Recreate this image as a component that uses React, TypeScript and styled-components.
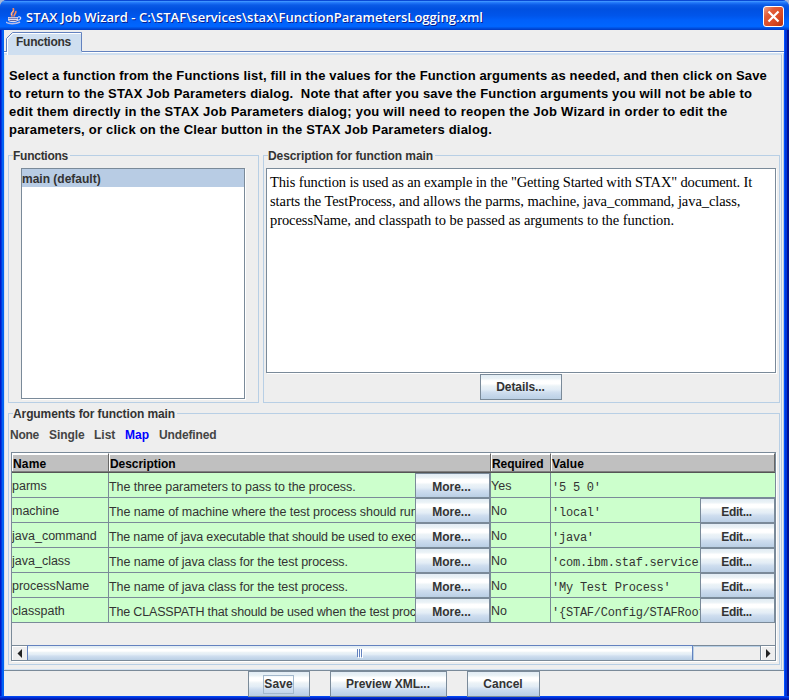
import React from "react";
import styled, { createGlobalStyle, css } from "styled-components";

const STEEL = "#7a8a99";
const PALE = "#b8cfe5";

const metal = css`
  background: linear-gradient(
    #e2ecf4 0,
    #eaf2f6 14%,
    #ffffff 24%,
    #ffffff 36%,
    #ecf3f7 46%,
    #e3edf6 60%,
    #cfdeef 72%,
    #c4d6ea 86%,
    #bacfe4 100%
  );
`;

const GlobalStyle = createGlobalStyle`
  * { box-sizing: border-box; }
  body { margin: 0; background: #a6b8d8; }
`;

const Window = styled.div`
  width: 789px;
  height: 700px;
  display: flex;
  flex-direction: column;
  overflow: hidden;
  border-radius: 7px 7px 0 0;
  background: #0046e8;
  font: bold 12px/14px "Liberation Sans", Arial, sans-serif;
  color: #333;
`;

const Text = styled.span<{ $ls?: number }>`
  display: block;
  white-space: pre;
  letter-spacing: ${(p) => p.$ls ?? 0}px;
`;

const TitleBar = styled.header`
  height: 30px;
  flex: none;
  display: flex;
  align-items: center;
  padding: 3px 5px 0 6px;
  color: #fff;
  font: 600 13px/18px "Open Sans", sans-serif;
  text-shadow: 1px 1px 0 #0a1f8f;
  background: linear-gradient(
    #0a48d4 0,
    #0a48d4 3%,
    #3c93ff 5%,
    #2176f8 9%,
    #0a5ae6 17%,
    #0050e0 30%,
    #0055ea 52%,
    #0060fa 68%,
    #0066ff 88%,
    #0050e0 94%,
    #0038c0 100%
  );
`;

const TitleText = styled(Text)`
  flex: 1;
  margin: 1px 0 0 4px;
`;

const Close = styled.button`
  width: 21px;
  height: 21px;
  padding: 0;
  display: grid;
  place-items: center;
  border: 1px solid #fff;
  border-radius: 3px;
  background: linear-gradient(135deg, #f0a088 0, #e25c38 30%, #da4a24 65%, #b83210 100%);
`;

const Body = styled.main`
  flex: 1;
  min-height: 0;
  display: flex;
  border: solid transparent;
  border-width: 0 5px 4px 4px;
  background:
    linear-gradient(#0050ff, #0030d8 40%, #00129a) bottom / 100% 4px no-repeat border-box,
    linear-gradient(90deg, #0019c8 0, #0019c8 1px, #0038e0 1px, #0038e0 2px, #0062f4 2px, #0062f4 4px) left / 4px 100% no-repeat border-box,
    linear-gradient(90deg, #0050ff 0, #0050ff 1px, #0035d8 1px, #0035d8 3px, #001090 3px) right / 5px 100% no-repeat border-box;
`;

const Client = styled.div`
  flex: 1;
  min-width: 0;
  display: flex;
  flex-direction: column;
  background: #eee;
`;

const TabStrip = styled.div`
  height: 22px;
  flex: none;
  display: flex;
  padding: 2px 0 0 2px;
  border-bottom: 1px solid #6382bf;
`;

const Tab = styled.div`
  position: relative;
  width: 77px;
  height: 23px;
`;

const TabLabel = styled(Text)`
  position: absolute;
  left: 10px;
  top: 3px;
`;

const Panel = styled.section`
  height: 618px;
  flex: none;
  display: flex;
  flex-direction: column;
  border: solid #cfdff0;
  border-width: 2px 3px 2px 1px;
  border-right: 3px double #b4c8de;
  margin-top: 1px;
  padding: 11px 2px 0 3px;
  box-shadow: 0 -1px #fff;
`;

const Intro = styled.div`
  height: 83px;
  padding: 1px 0 0 1px;
  font-size: 13px;
  line-height: 18px;
  color: #000;
`;

const Group = styled.fieldset<{ $w: number; $h: number }>`
  width: ${(p) => p.$w}px;
  height: ${(p) => p.$h}px;
  margin: 0;
  padding: 0;
  min-width: 0;
  border: 1px solid ${PALE};
  flex: none;
`;

const Legend = styled.legend`
  height: 13px;
  margin-left: 4px;
  padding: 0 2px 0 0;
`;

const Row = styled.div<{ $gap?: number }>`
  display: flex;
  gap: ${(p) => p.$gap ?? 0}px;
`;

const List = styled.div`
  width: 224px;
  height: 231px;
  margin: 6px 0 0 12px;
  border: 1px solid ${STEEL};
  background: #fff;
  box-shadow: 1px 1px #fff;
`;

const Selected = styled.div`
  height: 18px;
  padding: 3px 0 0;
  background: #b8cce4;
`;

const Prose = styled.div`
  width: 510px;
  height: 205px;
  margin: 6px 0 0 2px;
  padding: 4px 0 0 3px;
  border: 1px solid ${STEEL};
  background: #fff;
  color: #000;
  box-shadow: 1px 1px #fff;
  font: 14.5px/19px "Liberation Serif", "Times New Roman", serif;
`;

const Button = styled.button<{ $w: number; $h: number }>`
  width: ${(p) => p.$w}px;
  height: ${(p) => p.$h}px;
  flex: none;
  display: flex;
  align-items: center;
  justify-content: center;
  padding: 0 1px 0 0;
  border: 1px solid ${STEEL};
  font: inherit;
  color: #333;
  ${metal}
`;

const DetailsRow = styled.div`
  padding: 1px 0 0 216px;
`;

const ArgsGroup = styled(Group)`
  margin-top: 4px;
`;

const Kinds = styled.div`
  display: flex;
  height: 32px;
  padding: 8px 0 0 1px;
  color: #444;
`;

const Kind = styled(Text)<{ $w: number; $on?: boolean }>`
  width: ${(p) => p.$w}px;
  color: ${(p) => (p.$on ? "#0000ff" : "inherit")};
`;

const TablePane = styled.div`
  width: 765px;
  height: 209px;
  margin-left: 2px;
  display: flex;
  flex-direction: column;
  border: 1px solid ${STEEL};
  box-shadow: 1px 1px #fff;
`;

const columns = css`
  display: grid;
  grid-template-columns: 97px 382px 60px 224px;
`;

const HeadRow = styled.div`
  ${columns}
  height: 20px;
  flex: none;
  color: #000;
  background: #c0c0c0;
  border-bottom: 1px solid #555;
`;

const Head = styled.div`
  padding: 3px 0 0 1px;
  border: solid;
  border-width: 1px 1px 1px 0;
  border-color: #fff #666 #808080 #fff;
  box-shadow: inset 1px 1px #fff;
`;

const DataRow = styled.div`
  ${columns}
  height: 25px;
  flex: none;
  background: #ccffcc;
`;

const Cell = styled.div`
  min-width: 0;
  display: flex;
  overflow: hidden;
  border: solid ${STEEL};
  border-width: 0 1px 1px 0;
  font-weight: normal;
  font-size: 12.5px;
  &:last-child { border-right: 0; }
`;

const Clip = styled.div<{ $top: number; $left?: number; $mono?: boolean }>`
  flex: 1;
  min-width: 0;
  overflow: hidden;
  padding: ${(p) => p.$top}px 0 0 ${(p) => p.$left ?? 0}px;
  ${(p) => p.$mono && css`font: 12px/14px "Liberation Mono", "Courier New", monospace;`}
`;

const CellButton = styled(Button)`
  font-weight: bold;
  font-size: 12px;
  border-bottom: 0;
  padding: 2px 2px 0 0;
`;

const Blank = styled.div`
  flex: 1;
`;

const ScrollBar = styled.div`
  height: 15px;
  flex: none;
  display: flex;
  border-top: 1px solid ${STEEL};
`;

const Arrow = styled.div<{ $side: "left" | "right" }>`
  width: 15px;
  display: grid;
  place-items: center;
  box-shadow: inset 1px 1px #fff;
  ${(p) => p.$side === "right" && css`border-left: 1px solid ${STEEL};`}
`;

const Thumb = styled.div`
  width: 666px;
  display: grid;
  place-items: center;
  margin-top: -1px;
  border: 1px solid #6382bf;
  border-bottom: 0;
  ${metal}
`;

const Track = styled.div`
  flex: 1;
  box-shadow: inset 1px 1px ${PALE};
`;

const Footer = styled.footer`
  flex: 1;
  display: flex;
  gap: 20px;
  padding-left: 244px;
  border-top: 1px solid ${STEEL};
  margin-top: -1px;
`;

const FocusRing = styled.span`
  padding: 1px 0 2px;
  border: 1px solid #a3b8cc;
`;

const INTRO: [string, number][] = [
  ["Select a function from the Functions list, fill in the values for the Function arguments as needed, and then click on Save", 0.15],
  ["to return to the STAX Job Parameters dialog.  Note that after you save the Function arguments you will not be able to", 0.179],
  ["edit them directly in the STAX Job Parameters dialog; you will need to reopen the Job Wizard in order to edit the", 0.231],
  ["parameters, or click on the Clear button in the STAX Job Parameters dialog.", 0.202],
];

const PROSE: [string, number][] = [
  ['This function is used as an example in the "Getting Started with STAX" document. It', -0.137],
  ["starts the TestProcess, and allows the parms, machine, java_command, java_class,", -0.075],
  ["processName, and classpath to be passed as arguments to the function.", -0.07],
];

interface Arg {
  name: string;
  desc: string;
  required: string;
  value: string;
  edit?: boolean;
  tight?: number;
}

const ARGS: Arg[] = [
  { name: "parms", desc: "The three parameters to pass to the process.", required: "Yes", value: "'5 5 0'" },
  { name: "machine", desc: "The name of machine where the test process should run", required: "No", value: "'local'", edit: true },
  { name: "java_command", desc: "The name of java executable that should be used to exec", required: "No", value: "'java'", edit: true, tight: -0.16 },
  { name: "java_class", desc: "The name of java class for the test process.", required: "No", value: "'com.ibm.staf.service", edit: true },
  { name: "processName", desc: "The name of java class for the test process.", required: "No", value: "'My Test Process'", edit: true },
  { name: "classpath", desc: "The CLASSPATH that should be used when the test proc", required: "No", value: "'{STAF/Config/STAFRoot", edit: true, tight: -0.17 },
];

const JavaCup = () => (
  <svg width="16" height="17" viewBox="0 0 16 17" fill="none">
    <path d="M6.500 8.500C3 5.500 9.500 4 7 0M8.500 8.500C7 6.500 11 5.500 9.500 3" stroke="#f58a5c" strokeWidth="1.700" />
    <path d="M5.500 7C4.500 5 6.500 4 7.500 2.500" stroke="#ffd0b4" strokeWidth=".9" />
    <path d="M2 9h10v2.500c0 2-2 2.700-5 2.700s-5-.7-5-2.700z" fill="#dcdcf2" />
    <path d="M2.500 10.300h9M3.500 12.500h7" stroke="#50589c" strokeWidth=".9" />
    <path d="M12 9c3.500-1 4 2.500-.8 3.500" stroke="#dcdcf2" strokeWidth="1.200" />
    <path d="M0 14c2 2.300 10 2.300 14 0" stroke="#bcbce4" strokeWidth="1.500" />
  </svg>
);

const TabShape = () => (
  <svg width="77" height="23" viewBox="0 0 77 23">
    <path d="M1 23V7.500L7.500 1H76v22z" fill="#cfdff0" />
    <path d="M.5 20V6.500L6.500.5H75.500V19.500" fill="none" stroke="#6382bf" />
    <path d="M1.500 23V7L7 1.500H75" fill="none" stroke="#fff" />
  </svg>
);

export default function App() {
  return (
    <>
      <GlobalStyle />
      <Window>
        <TitleBar>
          <JavaCup />
          <TitleText $ls={0.044}>{"STAX Job Wizard - C:\\STAF\\services\\stax\\FunctionParametersLogging.xml"}</TitleText>
          <Close aria-label="Close">
            <svg width="13" height="13" viewBox="0 0 13 13">
              <path d="M1.500 1.500l10 10M11.500 1.500l-10 10" stroke="#fff" strokeWidth="2.200" />
            </svg>
          </Close>
        </TitleBar>
        <Body>
          <Client>
            <TabStrip>
              <Tab>
                <TabShape />
                <TabLabel $ls={-0.259}>Functions</TabLabel>
              </Tab>
            </TabStrip>
            <Panel>
              <Intro>
                {INTRO.map(([line, ls]) => (
                  <Text key={line} $ls={ls}>{line}</Text>
                ))}
              </Intro>
              <Row $gap={4}>
                <Group $w={251} $h={254}>
                  <Legend><Text $ls={-0.259}>Functions</Text></Legend>
                  <List>
                    <Selected><Text>main (default)</Text></Selected>
                  </List>
                </Group>
                <Group $w={517} $h={254}>
                  <Legend><Text $ls={-0.081}>Description for function main</Text></Legend>
                  <Prose>
                    {PROSE.map(([line, ls]) => (
                      <Text key={line} $ls={ls}>{line}</Text>
                    ))}
                  </Prose>
                  <DetailsRow>
                    <Button $w={82} $h={26}><Text $ls={-0.086}>Details...</Text></Button>
                  </DetailsRow>
                </Group>
              </Row>
              <ArgsGroup $w={772} $h={258}>
                <Legend><Text $ls={-0.099}>Arguments for function main</Text></Legend>
                <Kinds>
                  <Kind $w={39} $ls={-0.25}>None</Kind>
                  <Kind $w={45} $ls={-0.086}>Single</Kind>
                  <Kind $w={31}>List</Kind>
                  <Kind $w={34} $on>Map</Kind>
                  <Kind $w={70} $ls={-0.13}>Undefined</Kind>
                </Kinds>
                <TablePane>
                  <HeadRow>
                    <Head><Text $ls={0.2}>Name</Text></Head>
                    <Head><Text $ls={-0.047}>Description</Text></Head>
                    <Head><Text $ls={-0.064}>Required</Text></Head>
                    <Head><Text $ls={0.128}>Value</Text></Head>
                  </HeadRow>
                  {ARGS.map((arg) => (
                    <DataRow key={arg.name}>
                      <Cell>
                        <Clip $top={6}><Text>{arg.name}</Text></Clip>
                      </Cell>
                      <Cell>
                        <Clip $top={7}><Text $ls={arg.tight ?? -0.065}>{arg.desc}</Text></Clip>
                        <CellButton $w={75} $h={24}><Text>More...</Text></CellButton>
                      </Cell>
                      <Cell>
                        <Clip $top={6}><Text>{arg.required}</Text></Clip>
                      </Cell>
                      <Cell>
                        <Clip $top={8} $left={1} $mono><Text $ls={-0.23}>{arg.value}</Text></Clip>
                        {arg.edit && <CellButton $w={75} $h={24}><Text $ls={-0.31}>Edit...</Text></CellButton>}
                      </Cell>
                    </DataRow>
                  ))}
                  <Blank />
                  <ScrollBar>
                    <Arrow $side="left">
                      <svg width="5" height="9" viewBox="0 0 5 9"><path d="M5 0v9L.5 4.500z" fill="#222" /></svg>
                    </Arrow>
                    <Thumb>
                      <svg width="7" height="9" viewBox="0 0 7 9">
                        <path d="M1.500 1v8M3.500 1v8M5.500 1v8" stroke="#fff" />
                        <path d="M.5 0v8M2.500 0v8M4.500 0v8" stroke="#6382bf" />
                      </svg>
                    </Thumb>
                    <Track />
                    <Arrow $side="right">
                      <svg width="5" height="9" viewBox="0 0 5 9"><path d="M0 0v9l4.500-4.500z" fill="#222" /></svg>
                    </Arrow>
                  </ScrollBar>
                </TablePane>
              </ArgsGroup>
            </Panel>
            <Footer>
              <Button $w={62} $h={26}><FocusRing><Text $ls={0.1}>Save</Text></FocusRing></Button>
              <Button $w={117} $h={26}><Text>Preview XML...</Text></Button>
              <Button $w={73} $h={26}><Text>Cancel</Text></Button>
            </Footer>
          </Client>
        </Body>
      </Window>
    </>
  );
}
